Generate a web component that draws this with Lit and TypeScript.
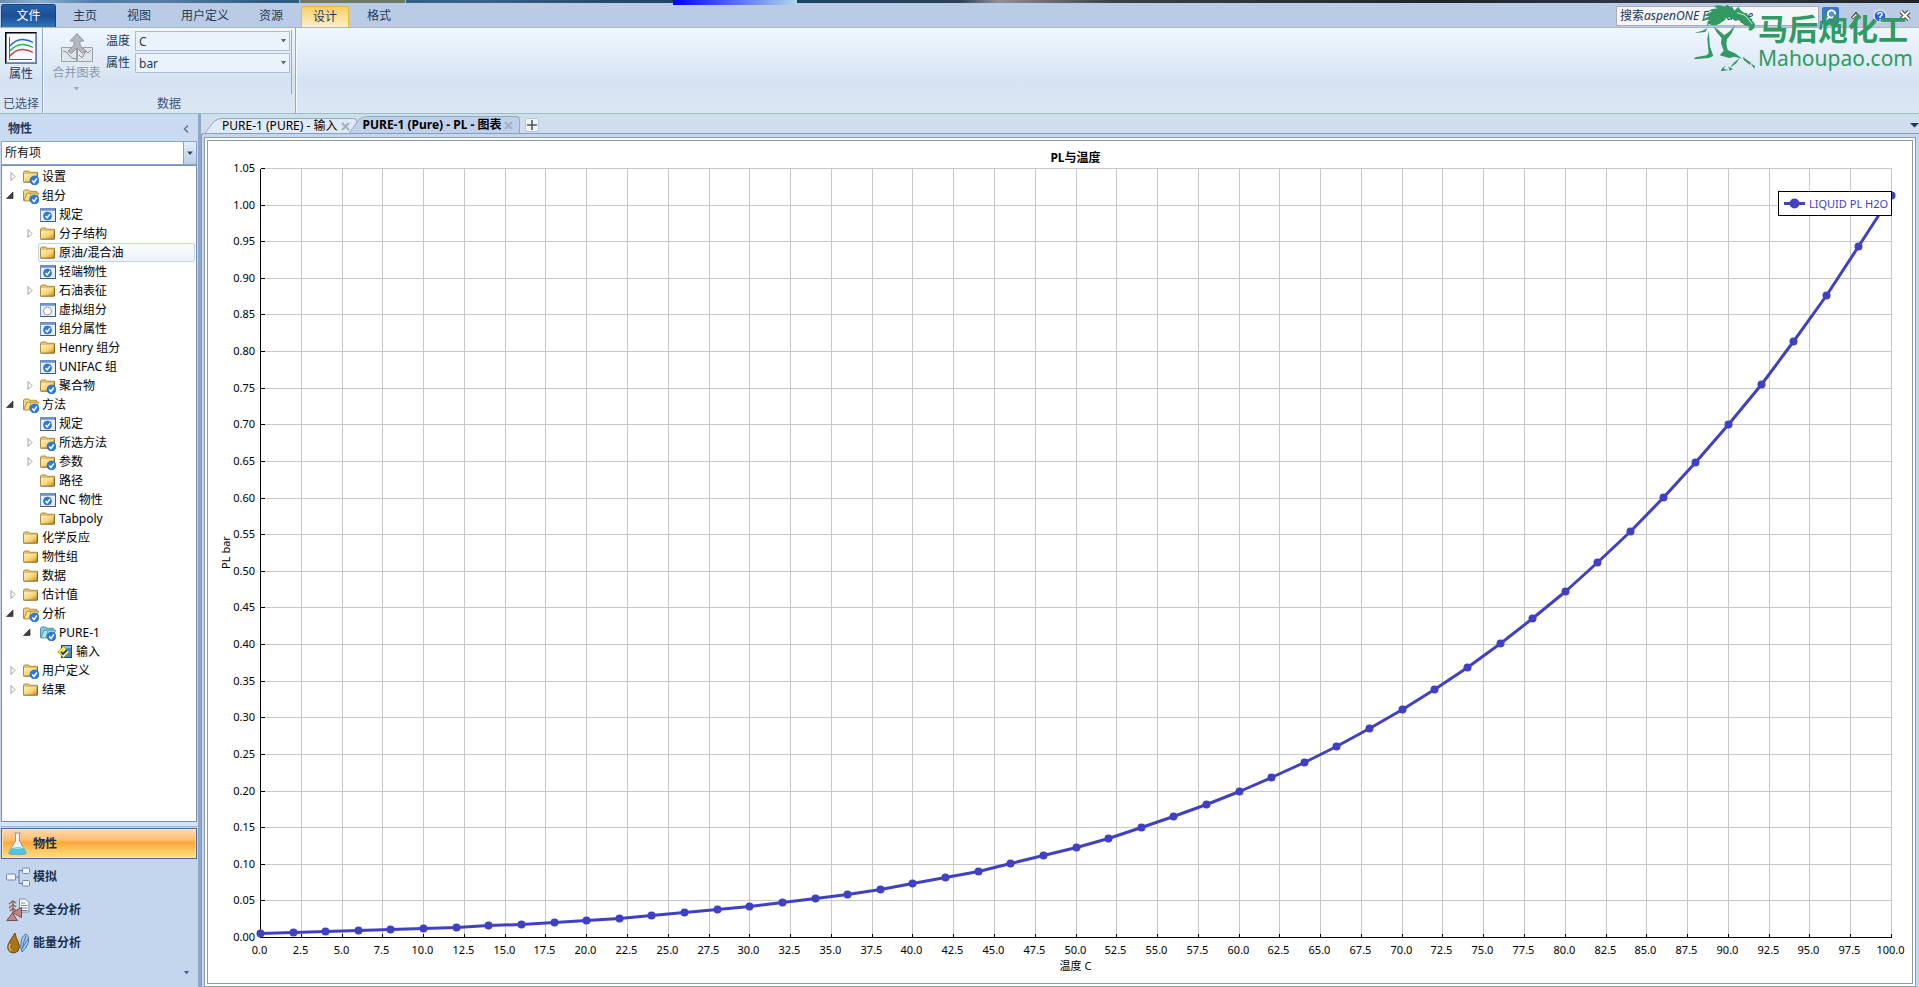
import { LitElement, html, svg, css, nothing, TemplateResult } from "lit";
import { customElement, property, state } from "lit/decorators.js";
import { classMap } from "lit/directives/class-map.js";

type IconName = "folder" | "folderOk" | "openOk" | "openBlue" | "formOk" | "formEmpty" | "input";

interface TreeRow {
  level: number;
  icon: IconName;
  label: string;
  expander?: "open" | "closed";
  hover?: boolean;
}

const TREE: TreeRow[] = [
  { level: 0, icon: "folderOk", label: "设置", expander: "closed" },
  { level: 0, icon: "openOk", label: "组分", expander: "open" },
  { level: 1, icon: "formOk", label: "规定" },
  { level: 1, icon: "folder", label: "分子结构", expander: "closed" },
  { level: 1, icon: "folder", label: "原油/混合油", hover: true },
  { level: 1, icon: "formOk", label: "轻端物性" },
  { level: 1, icon: "folder", label: "石油表征", expander: "closed" },
  { level: 1, icon: "formEmpty", label: "虚拟组分" },
  { level: 1, icon: "formOk", label: "组分属性" },
  { level: 1, icon: "folder", label: "Henry 组分" },
  { level: 1, icon: "formOk", label: "UNIFAC 组" },
  { level: 1, icon: "folderOk", label: "聚合物", expander: "closed" },
  { level: 0, icon: "openOk", label: "方法", expander: "open" },
  { level: 1, icon: "formOk", label: "规定" },
  { level: 1, icon: "folderOk", label: "所选方法", expander: "closed" },
  { level: 1, icon: "folderOk", label: "参数", expander: "closed" },
  { level: 1, icon: "folder", label: "路径" },
  { level: 1, icon: "formOk", label: "NC 物性" },
  { level: 1, icon: "folder", label: "Tabpoly" },
  { level: 0, icon: "folder", label: "化学反应" },
  { level: 0, icon: "folder", label: "物性组" },
  { level: 0, icon: "folder", label: "数据" },
  { level: 0, icon: "folder", label: "估计值", expander: "closed" },
  { level: 0, icon: "openOk", label: "分析", expander: "open" },
  { level: 1, icon: "openBlue", label: "PURE-1", expander: "open" },
  { level: 2, icon: "input", label: "输入" },
  { level: 0, icon: "folderOk", label: "用户定义", expander: "closed" },
  { level: 0, icon: "folder", label: "结果", expander: "closed" },
];

const badge = svg`
  <circle cx="11.5" cy="11.5" r="4.5" fill="#2a7de0" stroke="#1c5fb8" stroke-width=".6"></circle>
  <path d="M9.3 11.6l1.7 1.9 2.9-4" fill="none" stroke="#fff" stroke-width="1.5"></path>`;

const gold = svg`
  <linearGradient id="g" x1="0" y1="0" x2="1" y2="1">
    <stop offset="0" stop-color="#fff0bd"></stop><stop offset=".55" stop-color="#f7d374"></stop><stop offset="1" stop-color="#c98f1a"></stop>
  </linearGradient>`;

const closedFolder = svg`
  <defs>${gold}</defs>
  <path d="M.5 3.2L1.5 2h4.2l1 1.3h7.8v9.2H.5z" fill="#e5c26c" stroke="#b08c3a"></path>
  <path d="M1 5h13v8H1z" fill="url(#g)"></path>
  <path d="M.5 13.2h13.8V4.5" fill="none" stroke="#80601c"></path>`;

const openFolder = (light: string, dark: string, line: string) => svg`
  <path d="M.5 12.5V3.2L1.5 2h4.2l1 1.3h7v2.500" fill="${dark}" stroke="${line}"></path>
  <path d="M.8 12.9L4 5.2h11.5l-2.6 7.7z" fill="${light}" stroke="${line}"></path>
  <path d="M8 5.4l-2 7.2" stroke="${line}" stroke-width=".8"></path>`;

const form = svg`
  <rect x=".5" y="1.5" width="15" height="13" fill="#e9effa" stroke="#6f8cb8"></rect>
  <path d="M1 2.8h14" stroke="#6e94d2" stroke-width="2"></path>
  <path d="M15.5 1.5v13H.5" fill="none" stroke="#3c5a88"></path>`;

function treeIcon(name: IconName): TemplateResult {
  const body = {
    folder: closedFolder,
    folderOk: svg`${closedFolder}${badge}`,
    openOk: svg`${openFolder("#f8dd8c", "#f5d680", "#b08c3a")}${badge}`,
    openBlue: svg`${openFolder("#b4dfec", "#8cc6da", "#4f93aa")}${badge}`,
    formOk: svg`${form}<circle cx="7.5" cy="9" r="4" fill="#2a7de0" stroke="#1c5fb8" stroke-width=".6"></circle>
      <path d="M5.5 9l1.7 1.8L10 7" fill="none" stroke="#fff" stroke-width="1.4"></path>`,
    formEmpty: svg`${form}<circle cx="7.5" cy="9" r="4" fill="#fbfbf6" stroke="#9a9a94"></circle>`,
    input: svg`<rect x="4.500" y="1.500" width="10" height="12" fill="#3f86e0" stroke="#1b438c"></rect>
      <path d="M5 2h9v2H5z" fill="#8fc0f4"></path>
      <path d="M.7 8L6.500 2.300 12.300 8 6.500 13.700z" fill="#fdf440" stroke="#a89a1c"></path>
      <path d="M4 7.700l2 2.300 4-4" fill="none" stroke="#1535a8" stroke-width="1.800"></path>`,
  }[name];
  return html`<svg class="ico" viewBox="0 0 16 16" aria-hidden="true">${body}</svg>`;
}

/** Vapor pressure of water in bar (Antoine equation), temperature in °C. */
const vaporPressure = (t: number) => (10 ** (8.07131 - 1730.63 / (233.426 + t)) * 1.33322) / 1000;

@customElement("pl-chart")
class PlChart extends LitElement {
  @state() private w = 1200;
  @state() private h = 700;
  private observer?: ResizeObserver;

  static styles = css`
    :host { display: block; overflow: hidden; min-width: 0; min-height: 0; background: #fff; }
    svg { display: block; width: 100%; height: 100%; }
    text { font: 11px "Noto Sans", "Noto Sans CJK SC", sans-serif; fill: #000; }
    .title { font-weight: 700; font-size: 12px; }
    .grid { stroke: #c8c8c8; shape-rendering: crispEdges; }
    .axis { stroke: #000; shape-rendering: crispEdges; fill: none; }
    .line { fill: none; stroke: #4040c4; stroke-width: 3; stroke-linejoin: round; }
    .dot { fill: #4040c4; }
    .box { fill: #fff; stroke: #000; shape-rendering: crispEdges; }
    .legend { fill: #4040d0; }
  `;

  connectedCallback() {
    super.connectedCallback();
    this.observer = new ResizeObserver(() => this.measure());
    this.observer.observe(this);
  }

  disconnectedCallback() {
    this.observer?.disconnect();
    super.disconnectedCallback();
  }

  private measure() {
    this.w = this.clientWidth || this.w;
    this.h = this.clientHeight || this.h;
  }

  render() {
    const left = 52, top = 27, right = this.w - 21, bottom = this.h - 46;
    const X = (t: number) => left + ((right - left) * t) / 100;
    const Y = (p: number) => bottom - ((bottom - top) * p) / 1.05;
    const px = (n: number) => Math.round(n) + 0.5;
    const xs = Array.from({ length: 41 }, (_, i) => i * 2.5);
    const ys = Array.from({ length: 22 }, (_, i) => i * 0.05);
    const pts = Array.from({ length: 51 }, (_, i) => [X(i * 2), Y(vaporPressure(i * 2))].map(px));
    const mid = (left + right) / 2;
    return html`
      <svg viewBox="0 0 ${this.w} ${this.h}" role="img" aria-label="PL与温度">
        ${xs.slice(1).map((t) => svg`<line class="grid" x1=${px(X(t))} x2=${px(X(t))} y1=${px(top)} y2=${px(bottom)}></line>`)}
        ${ys.slice(1).map((p) => svg`<line class="grid" x1=${px(left)} x2=${px(right)} y1=${px(Y(p))} y2=${px(Y(p))}></line>`)}
        <path class="axis" d="M${px(left)} ${px(top)}V${px(bottom)}H${px(right)}"></path>
        ${xs.map((t) => svg`
          <line class="axis" x1=${px(X(t))} x2=${px(X(t))} y1=${px(bottom - 4)} y2=${px(bottom)}></line>
          <text x=${px(X(t)) - 1} y=${bottom + 17} text-anchor="middle">${t.toFixed(1)}</text>`)}
        ${ys.map((p) => svg`
          <line class="axis" x1=${px(left)} x2=${px(left) + 4} y1=${px(Y(p))} y2=${px(Y(p))}></line>
          <text x=${left - 5} y=${Math.round(Y(p)) + 4} text-anchor="end">${p.toFixed(2)}</text>`)}
        <polyline class="line" points=${pts.map((p) => p.join(",")).join(" ")}></polyline>
        ${pts.map(([x, y]) => svg`<circle class="dot" cx=${x} cy=${y} r="4"></circle>`)}
        <text class="title" x=${mid} y="21" text-anchor="middle">PL与温度</text>
        <text x=${mid} y=${this.h - 13} text-anchor="middle">温度 C</text>
        <text text-anchor="middle" transform="translate(22 ${(top + bottom) / 2}) rotate(-90)">PL bar</text>
        <g transform="translate(${right - 113} 50)">
          <rect class="box" x=".5" y=".5" width="113" height="24"></rect>
          <line class="line" x1="6" x2="27" y1="12.500" y2="12.500"></line>
          <circle class="dot" cx="16.500" cy="12.500" r="5"></circle>
          <text class="legend" x="31" y="17">LIQUID PL H2O</text>
        </g>
      </svg>`;
  }
}

@customElement("nav-tree")
class NavTree extends LitElement {
  @property({ attribute: false }) rows: TreeRow[] = [];

  static styles = css`
    :host { display: block; overflow: auto; background: #fff; padding-top: 1px; }
    ul { list-style: none; margin: 0; padding: 0 1px 0 2px; }
    .row { display: flex; align-items: center; height: 19px; font: 12px/19px "Noto Sans", "Noto Sans CJK SC", sans-serif; color: #000; white-space: nowrap; }
    .l1 { padding-left: 17px; }
    .l2 { padding-left: 34px; }
    .exp { width: 17px; height: 19px; flex: none; padding: 0; border: 0; background: none; display: block; }
    .exp svg { display: block; width: 9px; height: 9px; margin-left: 4px; }
    .exp.open svg { margin-left: 2px; }
    .body { display: flex; align-items: center; flex: 1; gap: 3px; height: 17px; border: 1px solid transparent; border-radius: 2px; padding-left: 1px; }
    .hover { border-color: #b8d6f7; background: linear-gradient(#fafcfe, #eef3fa); }
    .ico { width: 16px; height: 16px; flex: none; }
  `;

  private expander(kind?: "open" | "closed") {
    if (!kind) return html`<span class="exp"></span>`;
    return html`<button class=${classMap({ exp: true, open: kind === "open" })} aria-label=${kind === "open" ? "折叠" : "展开"}>
      <svg viewBox="0 0 9 9" aria-hidden="true">
        ${kind === "open"
          ? svg`<path d="M7 1v6.500H.5z" fill="#404040" stroke="#202020" stroke-width=".6"></path>`
          : svg`<path d="M3 .5v8l4-4z" fill="#fff" stroke="#a0a0a0"></path>`}
      </svg>
    </button>`;
  }

  render() {
    return html`<ul>
      ${this.rows.map((r) => html`
        <li class=${classMap({ row: true, l1: r.level === 1, l2: r.level === 2 })}>
          ${this.expander(r.expander)}
          <span class=${classMap({ body: true, hover: !!r.hover })}>${treeIcon(r.icon)}<span>${r.label}</span></span>
        </li>`)}
    </ul>`;
  }
}

const NAV_ICONS = [
  svg`<path d="M8 1h7M9.500 1.500V9L3 20.500q-.6 2 1.500 2h14q2 0 1.500-2L13.500 9V1.500" fill="#eef4f6" stroke="#8aa0a8"></path>
    <path d="M5.500 15h12l3 5.500q.5 1.800-1.500 1.800H4q-2 0-1.500-1.800z" fill="#55c3dc"></path>
    <path d="M5.500 15.500q6 1.500 12 0" fill="none" stroke="#c9eff7"></path>`,
  svg`<path d="M9 12h4M13 5.500v13M13 5.500h4M13 18.500h4" fill="none" stroke="#60789c"></path>
    <g fill="#f0f5ff" stroke="#6c87b8"><rect x=".5" y="9" width="9" height="6" rx="1"></rect><rect x="16.500" y="3" width="7" height="5.500" rx="1"></rect><rect x="16.500" y="15.500" width="7" height="5.500" rx="1"></rect></g>`,
  svg`<path d="M13.500 1h6l3.500 3.500V14h-9.500z" fill="#f4f7fb" stroke="#7c8ea8"></path>
    <path d="M15 5h4M15 7.500h6.500M15 10h6.500M15 12.500h6.500" stroke="#7c8ea8"></path>
    <path d="M7 15V2M3 6l4-3 3 2M3 10l4-3.500 3 2.500M4 13l3-3 3 3" fill="none" stroke="#94605c" stroke-width="1.300"></path>
    <path d="M.8 22.500L6.500 15l5 7.500zM6.500 14.500l9-5v10z" fill="#c08884" stroke="#7d4844"></path>`,
  svg`<path d="M9 2q1 5 3 8.500Q15 16 12 20q-3 3-7 1.500-5-3-2.500-9Q5 8 9 2z" fill="#a87416" stroke="#6e4a0c"></path>
    <path d="M4 13q-2 5 1.500 6.500" fill="none" stroke="#e3b858" stroke-width="1.500"></path>
    <path d="M16 21q-2-5-1-9 .500-7 5-9 4 3 2 9-1.500 5-6 9z" fill="#a9cbea" stroke="#3f74ac"></path>
    <path d="M20 5q-3 6-3.500 13M22 8q-3 4-5 8" fill="none" stroke="#3f74ac"></path>`,
];

@customElement("app-root")
class AppRoot extends LitElement {
  @state() private section = 0;

  static styles = css`
    :host { display: block; font: 12px/16px "Noto Sans", "Noto Sans CJK SC", sans-serif; color: #1e395b; }
    * { box-sizing: border-box; }
    button, input, select { font: inherit; color: inherit; margin: 0; }
    button { padding: 0; border: 0; background: none; }
    .app { position: relative; display: flex; flex-direction: column; height: 100vh; min-height: 760px; min-width: 900px; overflow: hidden; background: #c4d6ed; }

    .strip { position: relative; flex: none; height: 3px; background: linear-gradient(90deg, #6c8fae 0, #8cb0d0 2%, #4f7ba6 5%, #5b80a5 8%, #2f5a80 14%, #3a6288 25%, #24486a 32%, #1f4262 42%, #2b3f58 50%, #8d9096 52%, #3b4048 58%, #20252c 75%, #363c46 88%, #1e2228 100%); }
    .peek { position: absolute; top: 0; left: 299px; width: 107px; height: 3px; background: #6c7a66; border: solid #f0b52e; border-width: 0 1px; }
    .peek-title { position: absolute; top: 0; left: 673px; width: 124px; height: 5px; background: linear-gradient(90deg, #0000ff, #add8e6); }

    .tabs { flex: none; display: flex; align-items: stretch; height: 25px; padding: 1px 8px 0 1px; background: #bacce5; border-bottom: 1px solid #e8b32f; }
    .file { width: 55px; margin-right: 2px; color: #fff; border: 1px solid #17457f; border-bottom: 0; border-radius: 3px 3px 0 0; background: linear-gradient(#245fa8, #1c4f92 50%, #3273bd); }
    .tab { padding: 0 15px; color: #1e395b; }
    .tab.on { padding: 0 11px; margin: 2px 3px 0 3px; background: linear-gradient(#f7cf68, #fbe2a0 60%, #fdf0cc); border: 1px solid #ecb83a; border-bottom: 0; border-radius: 3px 3px 0 0; }
    .grow { flex: 1; }
    .search { display: flex; align-items: center; gap: 3px; }
    .search input { width: 203px; height: 20px; padding: 0 3px; border: 1px solid #a5adb8; background: #f4f6fa; outline: 0; }
    .search input::placeholder { color: #1e395b; opacity: 1; font-style: italic; font-synthesis: none; }
    .tools { display: flex; align-items: center; gap: 12px; }
    .tools svg, .search svg { display: block; }

    .ribbon { flex: none; display: flex; height: 86px; background: linear-gradient(#eff6fe, #dce8f5 50%, #d5e2f1 60%, #dbe7f4); border-bottom: 1px solid #e8b32f; }
    .group { display: flex; flex-direction: column; border-right: 1px solid #94a9c4; box-shadow: 1px 0 #f6faff; }
    .group-body { flex: 1; display: flex; }
    .caption { height: 19px; line-height: 20px; text-align: center; color: #3b5478; }
    .g1 { width: 43px; }
    .g2 { width: 253px; }
    .g2 .group-body { margin: 2px 3px 0 9px; border-right: 1px solid #94a9c4; }
    .big { display: flex; flex-direction: column; align-items: center; gap: 2px; line-height: 16px; }
    .g1 .big { padding: 4px 0 0 5px; }
    .merge { width: 49px; color: #8d98a8; padding-top: 3px; }
    .merge > svg:last-child { margin-top: 4px; }
    .fields { flex: 1; display: grid; grid-template-columns: 25px 1fr; grid-auto-rows: 20px; align-content: start; gap: 2px 4px; padding: 1px 1px 0 5px; line-height: 20px; }
    .combo { position: relative; display: block; }
    .combo select { display: block; width: 100%; height: 100%; appearance: none; padding: 0 18px 0 3px; border: 1px solid #a9bdd6; border-radius: 0; background: #eaf2fb; outline: 0; }
    .combo svg { position: absolute; right: 3px; top: 50%; margin-top: -2px; pointer-events: none; }

    .main { flex: 1; min-height: 0; display: grid; grid-template-columns: 198px 3px minmax(0, 1fr); }
    .side { display: flex; flex-direction: column; min-height: 0; padding: 0 1px; }
    .side-head { display: flex; align-items: center; justify-content: space-between; height: 27px; padding: 3px 9px 0 8px; margin: 0 -1px; background: #cadbf1; font-weight: 700; }
    .filter { height: 24px; flex: none; color: #111; }
    .filter select { background: #fff; border-color: #8ba5c9; }
    .filter .drop { right: 0; top: 0; margin: 0; width: 14px; height: 24px; background: linear-gradient(#e4eefa, #b9cfea); border: 1px solid #8ba5c9; }
    nav-tree { flex: 1; min-height: 0; border: 1px solid #7d8fa9; }
    .split { flex: none; height: 5px; margin: 0 0 1px; background: #d5e4f6; border-bottom: 1px solid #a5b8d3; }
    .nav { display: flex; flex-direction: column; padding-bottom: 29px; gap: 2px; position: relative; }
    .nav button { display: flex; align-items: center; gap: 3px; height: 31px; padding-left: 4px; font-weight: 700; border: 1px solid transparent; color: #1a2f4e; }
    .nav button.on { border-color: #4a6a9c; box-shadow: inset 0 0 0 1px #ffe3b0; background: linear-gradient(#ffdab0, #ffbd72 38%, #ffa63e 46%, #ffc35c 70%, #ffe084); }
    .nav button svg { width: 24px; height: 24px; }
    .more { position: absolute; right: 7px; bottom: 12px; }
    .gutter { background: #8fa6c8; }

    .work { display: flex; flex-direction: column; min-width: 0; min-height: 0; background: #d0dded; }
    .docs { flex: none; display: flex; align-items: flex-end; height: 19px; padding: 0 4px; color: #000; }
    .doc { display: flex; height: 15px; flex: none; }
    .doc.on { height: 17px; margin-left: -8px; font-weight: 700; position: relative; }
    .doc > svg { flex: none; display: block; }
    .doc-body { display: flex; align-items: center; gap: 3px; padding-right: 6px; background: #e0eaf6; border: solid #98a9bf; border-width: 1px 1px 0 0; border-radius: 0 4px 0 0; }
    .doc.on .doc-body { background: #bfd1ea; }
    .doc.on .doc-body > span { margin-left: -4px; }
    .add { width: 14px; height: 14px; margin: 0 0 1px 5px; border: 1px solid #b9c6d8; border-radius: 2px; background: #f0f5fb; }
    .add svg, .close svg { display: block; margin: auto; }
    .list { align-self: center; margin: 0 -4px 0 0; }
    .frame { flex: 1; min-height: 0; display: flex; padding: 3px 3px 0 2px; border: 1px solid #8d9db5; border-width: 1px 0 0 1px; border-radius: 3px 0 0 0; background: #c3d8f0; }
    .sheet { flex: 1; min-width: 0; display: flex; padding: 2px; border: 1px solid #8f9aab; background: #fff; }
    pl-chart { flex: 1; border: 1px solid #8f9aab; }

    .brand { position: absolute; top: 2px; right: 6px; display: flex; align-items: flex-start; gap: 1px; color: #319962; pointer-events: none; }
    .brand p { margin: 0; white-space: nowrap; }
    .brand-cn { font: 700 30px/36px "Noto Sans CJK SC", sans-serif; padding-top: 7px; }
    .brand-en { font: 21px/26px "Noto Sans", sans-serif; }
  `;

  private arrow(cls = "", color = "#5b6776") {
    return html`<svg class=${cls || nothing} width="7" height="4" viewBox="0 0 7 4" aria-hidden="true"><path d="M1 0h5L3.500 3.500z" fill=${color}></path></svg>`;
  }

  private close(label: string) {
    return html`<button class="close" aria-label=${label}><svg width="9" height="9" viewBox="0 0 9 9"><path d="M1 1l7 7M8 1L1 8" stroke="#a3afc0" stroke-width="2"></path></svg></button>`;
  }

  private slant(w: number, h: number, fill: string) {
    return html`<svg width=${w} height=${h} viewBox="0 0 ${w} ${h}" aria-hidden="true">
      <path d="M0 ${h}L${w - 8} 3.500Q${w - 4} .5 ${w} .5V${h}z" fill=${fill}></path>
      <path d="M0 ${h}L${w - 8} 3.500Q${w - 4} .5 ${w} .5" fill="none" stroke="#98a9bf"></path></svg>`;
  }

  private ribbonTabs() {
    const names = ["主页", "视图", "用户定义", "资源", "设计", "格式"];
    return html`<header class="tabs">
      <button class="file">文件</button>
      ${names.map((n) => html`<button class=${classMap({ tab: true, on: n === "设计" })}>${n}</button>`)}
      <span class="grow"></span>
      <div class="search">
        <input type="search" aria-label="搜索aspenONE Exchange" placeholder="搜索aspenONE Exchange">
        <div class="tools">
          <button aria-label="搜索"><svg width="17" height="17" viewBox="0 0 17 17"><rect width="17" height="17" rx="2" fill="#3a78c0"></rect><circle cx="9.500" cy="7" r="3.700" fill="#5b94d4" stroke="#fff" stroke-width="1.800"></circle><path d="M7 10l-4 4" stroke="#fff" stroke-width="2"></path></svg></button>
          <button aria-label="折叠功能区"><svg width="10" height="8" viewBox="0 0 10 8"><path d="M1 6.500L5 2l4 4.500" fill="none" stroke="#445" stroke-width="3"></path><path d="M1.500 6L5 2.500 8.500 6" fill="none" stroke="#fff" stroke-width="1.200"></path></svg></button>
          <button aria-label="帮助"><svg width="14" height="14" viewBox="0 0 14 14"><circle cx="7" cy="7" r="6" fill="#2a63d8" stroke="#dbe7fb" stroke-width="1.400"></circle><path d="M4.900 5.500Q5 3.500 7 3.500t2.200 1.800Q9.200 6.500 7 7.600V9M7 10v1.500" fill="none" stroke="#fff" stroke-width="1.500"></path></svg></button>
          <button aria-label="关闭"><svg width="12" height="11" viewBox="0 0 12 11"><path d="M2 1.500l8 8M10 1.500l-8 8" stroke="#444" stroke-width="4"></path><path d="M2 1.500l8 8M10 1.500l-8 8" stroke="#fff" stroke-width="2"></path></svg></button>
        </div>
      </div>
    </header>`;
  }

  private ribbon() {
    return html`<section class="ribbon">
      <div class="group g1">
        <div class="group-body">
          <button class="big">
            <svg width="32" height="32" viewBox="0 0 32 32" aria-hidden="true">
              <rect x=".5" y=".5" width="31" height="31" fill="#f6f9fe" stroke="#8ea0be"></rect>
              <path d="M.5 31.500V.5h31" fill="none" stroke="#000" stroke-width="2"></path><path d="M31 2v29H2" fill="none" stroke="#5d7399" stroke-width="1.500"></path>
              <path d="M4.500 5v22.500H27" fill="none" stroke="#44608f"></path>
              <path d="M5 14q6-7 13-6.500 6 .5 10 3" fill="none" stroke="#2e5fd8" stroke-width="1.400"></path>
              <path d="M5 19q6-7 13-6.500 6 .5 10 3" fill="none" stroke="#1fb84c" stroke-width="1.400"></path>
              <path d="M5 24q6-7 13-6.500 6 .5 10 3" fill="none" stroke="#d24040" stroke-width="1.400"></path>
            </svg>属性</button>
        </div>
        <div class="caption">已选择</div>
      </div>
      <div class="group g2">
        <div class="group-body">
          <button class="big merge">
            <svg width="32" height="30" viewBox="0 0 32 30" aria-hidden="true">
              <path d="M.5 14.500h15v14H.5zM16.500 14.500h15v14h-15z" fill="#e2e6eb" stroke="#9ba1a9"></path>
              <path d="M2 18q4 0 6 4t7 4M18 22l3 3 4-7 2 2 3-3" fill="none" stroke="#858b94"></path>
              <path d="M16 .5l7 7.500h-4v4l6 6-3.500 2.500L16 15l-5.500 5.500L7 18l6-6V8H9z" fill="#b4b7bc" stroke="#94989f"></path>
            </svg>
            <span>合并图表</span>${this.arrow("", "#9aa5b4")}
          </button>
          <div class="fields">
            <label for="temp">温度</label>
            <span class="combo"><select id="temp"><option>C</option></select>${this.arrow()}</span>
            <label for="prop">属性</label>
            <span class="combo"><select id="prop"><option>bar</option></select>${this.arrow()}</span>
          </div>
        </div>
        <div class="caption">数据</div>
      </div>
    </section>`;
  }

  private side() {
    const names = ["物性", "模拟", "安全分析", "能量分析"];
    return html`<aside class="side">
      <div class="side-head">物性
        <button aria-label="收起"><svg width="6" height="8" viewBox="0 0 6 8"><path d="M5 .5L1.500 4 5 7.500" fill="none" stroke="#68727f" stroke-width="1.500"></path></svg></button>
      </div>
      <span class="combo filter">
        <select aria-label="筛选"><option>所有项</option></select>
        <svg class="drop" viewBox="0 0 12 22" aria-hidden="true"><path d="M3 9.500h6L6 13z" fill="#2c4a78"></path></svg>
      </span>
      <nav-tree .rows=${TREE}></nav-tree>
      <div class="split"></div>
      <nav class="nav">
        ${names.map((n, i) => html`<button class=${classMap({ on: i === this.section })} @click=${() => (this.section = i)}>
          <svg viewBox="0 0 24 24" aria-hidden="true">${NAV_ICONS[i]}</svg>${n}</button>`)}
        ${this.arrow("more", "#44608c")}
      </nav>
    </aside>`;
  }

  private work() {
    return html`<main class="work">
      <div class="docs">
        <div class="doc">${this.slant(17, 15, "#e0eaf6")}<div class="doc-body"><span>PURE-1 (PURE) - 输入</span>${this.close("关闭 输入")}</div></div>
        <div class="doc on">${this.slant(18, 17, "#bfd1ea")}<div class="doc-body"><span>PURE-1 (Pure) - PL - 图表</span>${this.close("关闭 图表")}</div></div>
        <button class="add" aria-label="新建"><svg width="12" height="12" viewBox="0 0 12 12"><path d="M6 1v10M1 6h10" stroke="#4c5664" stroke-width="1.600"></path></svg></button>
        <span class="grow"></span>
        <button class="list" aria-label="标签列表"><svg width="9" height="5" viewBox="0 0 9 5"><path d="M0 0h9L4.500 4.500z" fill="#1e395b"></path></svg></button>
      </div>
      <div class="frame"><div class="sheet"><pl-chart></pl-chart></div></div>
    </main>`;
  }

  private brand() {
    return html`<div class="brand">
      <svg width="64" height="75" viewBox="42 8 192 225" aria-hidden="true">
        <g fill="#319962">
          <path d="M72 50Q84 42 100 36L88 34Q104 26 116 28L104 20Q124 14 136 22L146 16 154 24 158 20 166 34 178 22Q184 36 204 44L228 74 226 86 216 94 208 92 212 82 196 78 184 66Q176 60 170 66L158 56Q140 52 138 62L120 74Q104 82 90 74L84 80 86 66 96 58Q84 58 76 64L66 66Q76 56 92 50z"></path>
          <path d="M104 82l14 10 18 16 16-12 16-18-10 24-14 18-2 14 4 18 22 10 22 16-24-6-16 4-28-8 12-14-8-22 2-16-14-16z"></path>
          <path d="M89 96l4 46 10 28-14 6-44 4 4-6 34-6 6-6-4-44z"></path>
          <path d="M46 101l24-7 16-8-8 12-20 2zM182 176l-10 16-20 14 12-16zM192 172l12 10 12 8-4 6-18-14zM214 192l14 8-2 8zM128 208l12-10-6 10 14 4-22 4zM148 202l14 8-10 4zM236 212l14 14-6-2z"></path>
        </g>
        <path d="M174 40l24 8 22 26" fill="none" stroke="#d7e9e2" stroke-width="3"></path>
      </svg>
      <div><p class="brand-cn">马后炮化工</p><p class="brand-en">Mahoupao.com</p></div>
    </div>`;
  }

  render() {
    return html`<div class="app">
      <div class="strip"><span class="peek"></span><span class="peek-title"></span></div>
      ${this.ribbonTabs()}
      ${this.ribbon()}
      <div class="main">${this.side()}<div class="gutter"></div>${this.work()}</div>
      ${this.brand()}
    </div>`;
  }
}
